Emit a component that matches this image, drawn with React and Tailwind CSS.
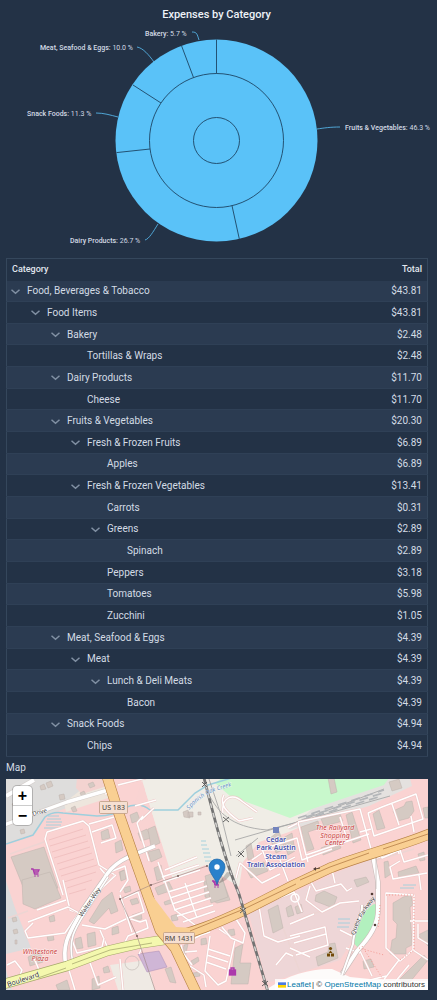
import React from "react";

const slices = [
  { name: "Fruits & Vegetables", share: "46.3", x: 345, y: 130, line: "M317 129C324 128 330 127 340 127" },
  { name: "Dairy Products", share: "26.7", x: 70, y: 243, line: "M158 224C153 232 149 239 145 240" },
  { name: "Snack Foods", share: "11.3", x: 27, y: 116, line: "M118 117C110 115 104 113 96 113" },
  { name: "Meat, Seafood & Eggs", share: "10.0", x: 40, y: 50, line: "M154 62C149 55 143 48 137 47" },
  { name: "Bakery", share: "5.7", x: 145, y: 36, line: "M199 40C197 34 197 32 192 32" },
];

const rows = [
  [0, "Food, Beverages & Tobacco", "$43.81", true],
  [1, "Food Items", "$43.81", true],
  [2, "Bakery", "$2.48", true],
  [3, "Tortillas & Wraps", "$2.48", false],
  [2, "Dairy Products", "$11.70", true],
  [3, "Cheese", "$11.70", false],
  [2, "Fruits & Vegetables", "$20.30", true],
  [3, "Fresh & Frozen Fruits", "$6.89", true],
  [4, "Apples", "$6.89", false],
  [3, "Fresh & Frozen Vegetables", "$13.41", true],
  [4, "Carrots", "$0.31", false],
  [4, "Greens", "$2.89", true],
  [5, "Spinach", "$2.89", false],
  [4, "Peppers", "$3.18", false],
  [4, "Tomatoes", "$5.98", false],
  [4, "Zucchini", "$1.05", false],
  [2, "Meat, Seafood & Eggs", "$4.39", true],
  [3, "Meat", "$4.39", true],
  [4, "Lunch & Deli Meats", "$4.39", true],
  [5, "Bacon", "$4.39", false],
  [2, "Snack Foods", "$4.94", true],
  [3, "Chips", "$4.94", false],
];

const indents = ["pl-0", "pl-5", "pl-10", "pl-15", "pl-20", "pl-25"];

function Chart() {
  return (
    <svg viewBox="0 24 437 226" className="block w-full font-[Roboto,sans-serif]" role="img" aria-label="Expenses by Category">
      <circle cx="216.5" cy="140.5" r="101" fill="#5ac2f8" />
      <g fill="none" stroke="#1d4564" strokeWidth="0.9">
        <circle cx="216.5" cy="140.5" r="67" />
        <circle cx="216.5" cy="140.5" r="23" />
        <path d="M216.500 39.500V73.500M239.300 238.900L232 205.700M116.500 152.600L150 149M133 85L161 103M181.500 45.700L193.500 77.500" />
      </g>
      {slices.map((s) => (
        <g key={s.name}>
          <path d={s.line} fill="none" stroke="#5ac2f8" strokeWidth="0.8" />
          <text x={s.x} y={s.y} fill="#d3dbe5" className="text-[7px]">
            <tspan className="font-medium">{s.name}:</tspan> {s.share} %
          </text>
        </g>
      ))}
    </svg>
  );
}

function CategoryTable() {
  return (
    <table className="h-[499px] w-full border-collapse border border-[#35475c] text-[10px] leading-4">
      <thead>
        <tr className="text-[9px] text-[#e1e7ef]">
          <th scope="col" className="h-[22px] px-[5px] pt-0 pb-[2px] text-left font-medium">Category</th>
          <th scope="col" className="px-[5px] pt-0 pb-[2px] text-right font-medium">Total</th>
        </tr>
      </thead>
      <tbody>
        {rows.map(([level, name, total, open], i) => (
          <tr key={i} className="border-b border-[#2f4056] odd:bg-[#2b3b51]">
            <td className="px-[3px] pt-px pb-0">
              <div className={`flex items-center ${indents[level]}`}>
                <span className="flex w-[17px] shrink-0">
                  {open && (
                    <button type="button" aria-label={`Collapse ${name}`} className="cursor-pointer">
                      <svg viewBox="0 0 11 11" className="size-[11px]" fill="none" stroke="#8190a3" strokeWidth="1.500">
                        <path d="M1.500 3.800L5.500 7.300L9.500 3.800" />
                      </svg>
                    </button>
                  )}
                </span>
                {name}
              </div>
            </td>
            <td className="px-[5px] pt-px pb-0 text-right">{total}</td>
          </tr>
        ))}
      </tbody>
    </table>
  );
}

const buildings = [
  "M11 857L44 847L58 888L28 899Z", "M22 880L50 872L61 898L35 909L23 904Z",
  "M101 832L108 829L110 838L102 840Z", "M115 843L121 840L123 850L116 853Z", "M130 815L137 812L140 820L132 823Z", "M138 833L147 829L151 838L141 841Z", "M119 872L124 870L125 878L121 880Z",
  "M102 900L112 892L118 911L111 914L109 908L94 924L89 921Z", "M120 872L125 870L126 879L121 881Z", "M123 888L130 886L131 891L125 893Z", "M130 900L137 898L139 903L132 905Z", "M132 915L141 912L142 919L134 921Z", "M112 928L118 926L119 933L112 935Z", "M87 934L95 932L96 945L88 947Z", "M75 939L81 937L83 948L76 949Z", "M47 936L53 934L54 940L48 941Z", "M49 917L54 915L55 921L50 922Z",
  "M148 852L159 849L162 857L151 862Z", "M154 868L161 865L164 878L157 881Z", "M155 888L169 882L173 890L158 895Z", "M164 902L172 899L173 903L165 905Z", "M171 916L177 914L178 920L172 921Z", "M148 829L155 826L160 843L151 847Z",
  "M204 882L220 872L230 900L217 903L205 897Z", "M205 876L220 871L228 897L211 903Z",
  "M183 812L188 810L190 818L184 817ZM188 812h5v5h-5zM198 812h3v3h-3z", "M235 948L243 944L240 963L251 963L248 984L231 984Z", "M228 930L234 929L235 935L229 936Z",
  "M201 939L206 938L207 944L201 945Z", "M191 961L198 957L199 961L193 965Z", "M193 973L200 972L200 976L194 977Z", "M184 945L188 944L185 958L182 957Z",
  "M246 869L264 862L268 871L251 878Z", "M270 838L279 831L285 849L276 853Z", "M283 838L292 833L295 851L288 855Z", "M246 846L251 843L254 858L248 860Z",
  "M301 827L318 821L320 828L308 832L314 849L305 852Z", "M321 819L340 814L343 821L324 826Z", "M346 815L352 812L361 840L353 843Z", "M321 848L338 841L341 848L323 855Z",
  "M373 814L379 810L385 828L377 830Z", "M393 811L404 806L406 802L412 801L414 811L409 818L398 821Z", "M389 782L399 779L402 788L392 791Z", "M423 808L428 807V818H425Z", "M328 778L334 778L337 792L331 794Z",
  "M268 910L278 905L283 928L273 933Z", "M286 908L291 905L294 915L288 917Z", "M316 895L324 891L337 897L333 908L315 901Z", "M295 907L301 904L303 912L297 914Z",
  "M354 880L366 877L369 882L357 887Z", "M384 862L388 861L391 874L385 878Z", "M398 872L416 866L419 873L399 879Z", "M418 854L424 852L425 860L420 861Z",
  "M393 903L400 899L403 897L411 895L413 905L410 907L412 945L406 948V954L390 954L392 940L396 938L397 924L393 920Z", "M363 961L371 959L374 967L364 969Z", "M316 957L328 952L329 944L335 943L338 958L318 966Z", "M400 979L424 955L428 960L405 988Z", "M418 935L428 930V946Z",
  "M28 957L40 951L43 962L30 966Z", "M56 985L67 980L70 990H58Z", "M92 979L99 976L100 988L92 990Z", "M103 968L108 966L110 972L104 973Z", "M165 969L171 967L176 983L170 982Z",
  "M23 794l4-2 2 4-4 3z", "M46 783l5-2 2 5-5 2z", "M12 804l4-2 2 4-4 2z", "M59 795l5-1 1 5-5 1z", "M80 793l4-2 2 4-4 2z", "M88 784l5-2 2 4-5 2z", "M40 786l4-2 2 5-5 1z", "M20 830l4-1 1 4-4 1z", "M71 808l4-2 2 5-4 1z",
  "M12 918l4-1 1 4-4 1zM13 930l4-1 1 4-4 1zM15 940l2 0 0 4-2 0z",
];

const minorRoads = [
  "M47 832L83 821L89 826L99 865L115 875L94 892M47 832L45 839L63 895",
  "M89 824L114 817M92 832L112 825L116 838L101 843", "M100 868L105 874L125 866L128 880L120 892",
  "M135 806L156 800M137 823L149 861M141 820L154 808M137 823L143 816", "M118 785L146 778M105 794L113 792",
  "M63 880L70 910L84 915L102 888L116 875", "M28 922L68 907L79 913L65 933L28 938L25 931L33 923", "M82 925L105 929L128 918L140 922L146 920L148 928L128 936L125 942",
  "M120 895L132 932M124 898L138 892L144 912L128 918M100 930L110 953", "M72 940L77 953L102 947L104 938", "M37 910L66 900",
  "M158 862L175 910L195 925M165 870L197 857M162 877L199 865M163 882L200 870M168 892L204 881M170 898L207 886M172 904L209 892M174 910L211 898M177 916L213 905M183 922L215 911M185 883L197 918",
  "M181 945L183 953L192 965M187 942L201 935L210 932M210 936L205 971L218 985L226 981L235 940L219 929M208 949L230 956M207 955L228 962M206 962L226 969M190 966L204 975L206 987M185 952L197 951",
  "M236 878L240 863L262 883L280 874M262 849L270 870L295 857M266 848L297 838L302 860L332 849M280 860L288 881M288 828L298 823L308 862M262 853L252 860",
  "M298 822L360 809L371 849M298 822L306 855L369 834M340 817L348 842M360 832L371 829", "M368 813L382 807L416 794L423 819L374 836L368 813M392 804L399 825M411 816L414 832", "M378 848L382 858L400 850L404 862L428 855M399 854L397 841M400 861L390 867L393 879L427 873M384 855L377 858M419 875L421 890",
  "M311 882L316 891L341 884L347 891L352 888M310 886L306 900L322 912L340 903L359 901M335 883L332 870M290 936L325 927L328 945L296 955M294 943L326 934M290 924L314 914M340 930L352 936M290 948L310 957",
  "M259 906L264 936L278 942L300 936M259 906L294 892L302 912", "M386 893L414 895L413 950L400 961L386 948ZM359 949L372 976M399 960L379 986M409 965L395 982M410 921L428 921M418 924L418 938L428 944M413 950L428 960M360 953L346 948M370 980L386 976",
  "M276 965L286 953L293 956M222 927L231 938L243 943L245 933L236 919", "M7 965L15 961L22 970L16 985M34 958L42 977M68 967L75 990M89 960L98 985L116 977M120 959L123 990M144 944L139 954", "M224 795C219 804 226 812 239 821L253 818M223 813C221 798 232 792 243 802L257 812",
];

const Poly = ({ d, fill, stroke = "none" }) => <path d={d} fill={fill} stroke={stroke} strokeWidth="0.500" />;

function RoadLines({ d, width, fill, casing }) {
  return (
    <g fill="none" strokeLinejoin="round">
      <path d={d} stroke={casing} strokeWidth={width + 1.2} />
      <path d={d} stroke={fill} strokeWidth={width} />
    </g>
  );
}

function Tiles() {
  const rail = "M203 774C212 809 217 829 222 845C228 866 234 882 239 894L268 992";
  const main = "M105 770L118 811L134 857L160 930L175 948L196 992";
  const cross = "M165 938C190 935 219 922 245 910L294 885L330 868C363 855 398 847 432 833";
  return (
    <svg viewBox="6 779 422 211" preserveAspectRatio="xMidYMid slice" className="block w-full font-['Noto_Sans',sans-serif]" role="img" aria-label="Street map of Cedar Park">
      <rect x="6" y="778" width="422" height="213" fill="#fad3d2" />
      <Poly d="M6 778H108L113 791L64 809L46 815L36 833L6 843Z" fill="#dedddc" />
      <Poly d="M82 789L110 779L114 796L66 812L64 803Z" fill="#eee6dd" />
      <Poly d="M77 778H105L107 786L82 794L76 788Z" fill="#f3d3d0" />
      <Poly d="M6 881L15 908L31 948L6 954Z" fill="#dcdcdd" />
      <Poly d="M140 778H391L384 790L289 832L259 842L243 862L239 887L205 865L173 880L145 790Z" fill="#f0ede6" />
      <Poly d="M142 780L145 790L163 851L171 884L190 878L204 866L236 895L213 913L181 930L160 910L132 815Z" fill="#f9d3d2" />
      <Poly d="M151 810L167 850L175 880L205 864L225 858L220 820L205 785L170 780Z" fill="#f0ede6" />
      <Poly d="M146 778H206L210 800L158 832L145 790Z" fill="#f0ede6" />
      <Poly d="M215 783L222 778H390L384 786L310 810L290 818L230 796Z" fill="#c8f8cc" />
      <Poly d="M289 830L312 809L384 785L389 778H410L412 786L369 806Z" fill="#e4e1df" />
      <Poly d="M249 914L295 892L340 871L375 858L378 900L340 960L290 976L267 983Z" fill="#eed6d7" />
      <Poly d="M110 965L147 960L155 990H118Z" fill="#efeae4" />
      <Poly d="M138 954L159 951L167 967L147 972Z" fill="#cfb6d6" stroke="#a98ab4" />
      <Poly d="M6 970V990H12Z" fill="#dedddc" />
      <Poly d="M267 989C289 974 314 968 332 969L350 977L390 981L428 981V990H267Z" fill="#fdfbfa" />
      <Poly d="M365 911C373 905 377 900 376 909L374 929C371 935 365 941 358 948L352 941L356 931Z" fill="#b2f0be" />
      <g stroke="#edb9b9" strokeWidth="0.700" fill="none">
        <path d="M49 840L83 829M50 846L86 835M52 852L88 841M54 858L90 847M57 864L92 853M59 870L94 859M61 876L97 865M64 882L96 872M67 888L92 880M69 894L86 889" />
      </g>
      <g stroke="#edd5d3" strokeWidth="1.500" fill="none">
        <path d="M8 918L28 911M10 854L44 842M280 920L300 972M300 918L340 905M370 862L414 849" />
      </g>
      {buildings.map((d, i) => <Poly key={i} d={d} fill="#d5cac3" stroke="#bdb2ad" />)}
      <g fill="none" stroke="#9dcfdd" strokeWidth="1.500">
        <path d="M6 844L33 835L45 817Q53 811 63 813L97 816Q115 816 124 808Q140 801 150 810H178L195 793L208 785L235 777" />
        <path d="M48 816H59M47 819H61M46 822H62M46 825H61M44 828H58M201 841h5M201 845h6M202 849h7M203 853h7M204 857h7M205 861h7M338 919h12M338 923h12M337 927h12M403 885h13M400 888h14" strokeWidth="0.900" />
      </g>
      <g fill="none" stroke="#a8a8a8" strokeWidth="0.900">
        <path d="M208 793C218 812 230 827 267 830L294 823L384 789M235 840L294 823L390 796" />
        <path d="M298 818L384 790M306 817L386 792M302 820L382 796" stroke="#b3b6b9" strokeWidth="1.600" strokeDasharray="9 5" />
        <path d="M209 779L221 815L231 856M236 856L258 838" />
      </g>
      {minorRoads.map((d, i) => <RoadLines key={i} d={d} width={1.4} fill="#fff" casing="#eec9c8" />)}
      <RoadLines d="M4 825L67 802L115 788" width={3.4} fill="#fff" casing="#d4cecb" />
      <RoadLines d="M6 796L34 780" width={4} fill="#fff" casing="#d4cecb" />
      <RoadLines d="M66 966C61 941 72 930 83 909L104 879C114 860 133 855 155 846" width={3.6} fill="#fff" casing="#c9bfbd" />
      <RoadLines d="M73 963C67 938 76 927 88 908L108 877" width={1.6} fill="#fff" casing="#c9bfbd" />
      <RoadLines d="M373 856L378 882V907C379 924 370 937 357 951L342 974" width={4} fill="#fff" casing="#cbbcba" />
      <RoadLines d="M362 905C363 917 353 930 353 944L342 975" width={2} fill="#fff" casing="#cbbcba" />
      <path d="M376 856V889" stroke="#c9bfbd" strokeWidth="0.800" />
      <RoadLines d="M4 984L67 966L107 951L137 944L164 940" width={9} fill="#f4f8ae" casing="#a5a86a" />
      <path d="M38 978L66 968M72 964L110 950L152 943" stroke="#8e915a" strokeWidth="0.600" fill="none" />
      <RoadLines d={cross} width={9.500} fill="#f9cf92" casing="#b68246" />
      <RoadLines d={main} width={9.500} fill="#f9cf92" casing="#b68246" />
      <path d="M145 886L158 932L166 940L190 936L219 924L235 915V911L194 928L176 927Z" fill="#f9cf92" />
      <path d="M190 931L244 909L296 884M300 880L330 867L369 853M383 849L428 834" fill="none" stroke="#a0632f" strokeWidth="0.600" />
      <g fill="none">
        <path d={rail} stroke="#737373" strokeWidth="2.800" />
        <path d={rail} stroke="#d4d3d0" strokeWidth="1.500" strokeDasharray="5 5" />
        <path d="M120 899L151 885L207 866M120 899L137 936L155 990" stroke="#9e8482" strokeWidth="0.600" />
        <path d="M223 817l6 5m0-5l-6 5M238 851l6 6m0-6l-6 6M240 908l6 5m0-5l-6 5M262 981l6 5m0-5l-6 5M202 782l5 5m0-5l-5 5" stroke="#555" strokeWidth="0.900" />
        <path d="M362 946L386 984M359 948L384 955M380 905L378 929M386 895H414V950L400 960" stroke="#f39b94" strokeWidth="1" strokeDasharray="1 2" />
      </g>
      <g fill="none"><circle cx="132" cy="963" r="7" stroke="#c4bbb8" strokeWidth="0.700" /><circle cx="295" cy="898" r="4" stroke="#fff" strokeWidth="1.500" /></g>
      <g fill="#765f5b"><circle cx="120" cy="899" r="1" /><circle cx="137" cy="936" r="1" /><circle cx="151" cy="885" r="1" /><circle cx="178" cy="876" r="1" /><circle cx="207" cy="866" r="1" /></g>
      <rect x="273" y="827" width="6" height="6" fill="#7384bd" />
      <g fill="#503b35"><circle cx="372" cy="894" r="1.300" /><circle cx="375" cy="925" r="1.300" /><path d="M313 869l3-2v1.500l4-1v1l-4 .8v1.500z" /></g>
      <g fill="#734a08"><circle cx="330.500" cy="948.500" r="1.600" /><path d="M328.500 953l2-2.500 2 2.500zM327 953.500h3v3h-3zM331 953.500h3v3h-3z" /></g>
      <g fill="none" stroke="#ac39ac" strokeWidth="1.300"><path d="M31 869h2l1.500 5h4M33 870h6l-1 2h-4M212 881h2l1 4h4M213 882h5l-1 2h-3" /><rect x="229.500" y="970" width="6" height="5" fill="#ac39ac" /><path d="M231 970v-2h3v2" /></g>
      <g fill="#ac39ac"><circle cx="35" cy="876" r=".8" /><circle cx="38" cy="876" r=".8" /><circle cx="215" cy="887" r=".8" /><circle cx="218" cy="887" r=".8" /></g>
      <g fill="#f6dfd1" stroke="#b8957d" strokeWidth="0.700"><rect x="99.500" y="801.500" width="28" height="12" rx="1" /><rect x="163.500" y="932.500" width="31" height="11" rx="1" /></g>
      <g fill="#493f3b" textAnchor="middle" className="text-[7px]"><text x="113.500" y="810">US 183</text><text x="179" y="941">RM 1431</text></g>
      <g fill="#444ca8" stroke="#fff" strokeWidth="1.200" paintOrder="stroke" textAnchor="middle" className="text-[7px] font-semibold">
        <text x="276" y="842">Cedar</text><text x="276" y="850">Park Austin</text><text x="276" y="859">Steam</text><text x="276" y="867">Train Association</text>
      </g>
      <g fill="#cb3d3c" stroke="#fff" strokeWidth="1" strokeOpacity="0.700" paintOrder="stroke" textAnchor="middle" className="text-[7px] italic">
        <text x="335" y="830">The Railyard</text><text x="335" y="838">Shopping</text><text x="335" y="845">Center</text><text x="40" y="954">Whitestone</text><text x="40" y="961">Plaza</text>
      </g>
      <defs>
        <path id="creek" d="M189 810Q200 797 213 792L250 780" /><path id="walton" d="M82 917L103 886" />
        <path id="quest" d="M355 935Q358 919 378 895" /><path id="boulevard" d="M8 987L41 976" />
      </defs>
      <g className="text-[6px]" fill="#333" stroke="#fff" strokeWidth="0.800" strokeOpacity="0.700" paintOrder="stroke">
        <text fill="#668fc2" className="italic"><textPath href="#creek">Spanish Oak Creek</textPath></text>
        <text><textPath href="#walton">Walton Way</textPath></text>
        <text><textPath href="#quest">Quest Parkway</textPath></text>
        <text className="text-[7px]"><textPath href="#boulevard">Boulevard</textPath></text>
        <text transform="translate(33 816) rotate(-15)">Drive</text>
      </g>
      <path d="M218 884L227 872L232 873L226 880Z" fill="#0003" />
      <path d="M217 884.500C216 879 209 873 209 867a8 8 0 0 1 16 0C225 873 218 879 217 884.500Z" fill="#2a81cb" stroke="#2168a7" strokeWidth="0.700" /><circle cx="217" cy="867" r="2.700" fill="#fff" />
    </svg>
  );
}

function Map() {
  return (
    <section aria-labelledby="map-title">
      <h2 id="map-title" className="h-[22px] pt-[3px] text-[10px] leading-4">Map</h2>
      <div className="relative overflow-hidden font-['Liberation_Sans',sans-serif]">
        <Tiles />
        <div className="absolute top-[7px] left-[7px] flex flex-col divide-y divide-[#ccc] rounded-sm bg-white text-[16px] font-bold text-black shadow-[0_0_0_1px_#0003]">
          <button type="button" aria-label="Zoom in" className="flex h-5 w-[19px] cursor-pointer items-center justify-center">+</button>
          <button type="button" aria-label="Zoom out" className="flex h-[19px] w-[19px] cursor-pointer items-center justify-center">−</button>
        </div>
        <div className="absolute right-0 bottom-0 flex items-center gap-px bg-white/80 px-[3px] text-[8px] leading-[11px] text-[#333]">
          <svg viewBox="0 0 12 8" className="h-[6px] w-2" aria-hidden="true"><path fill="#4c7be1" d="M0 0h12v4H0z" /><path fill="#ffd500" d="M0 4h12v4H0z" /></svg>
          <a href="https://leafletjs.com" className="text-[#0078a8]">Leaflet</a>
          <span>| © <a href="https://www.openstreetmap.org/copyright" className="text-[#0078a8]">OpenStreetMap</a> contributors</span>
        </div>
      </div>
    </section>
  );
}

export default function App() {
  return (
    <main className="min-h-screen bg-[#233246] pb-[10px] font-[Roboto,sans-serif] text-[#d3dbe5]">
      <h1 className="h-6 pt-[6px] pr-1 text-center text-[11px] leading-[18px] font-medium text-[#eef3f8]">Expenses by Category</h1>
      <Chart />
      <div className="pt-2 pr-[9px] pl-[6px]">
        <CategoryTable />
        <Map />
      </div>
    </main>
  );
}
